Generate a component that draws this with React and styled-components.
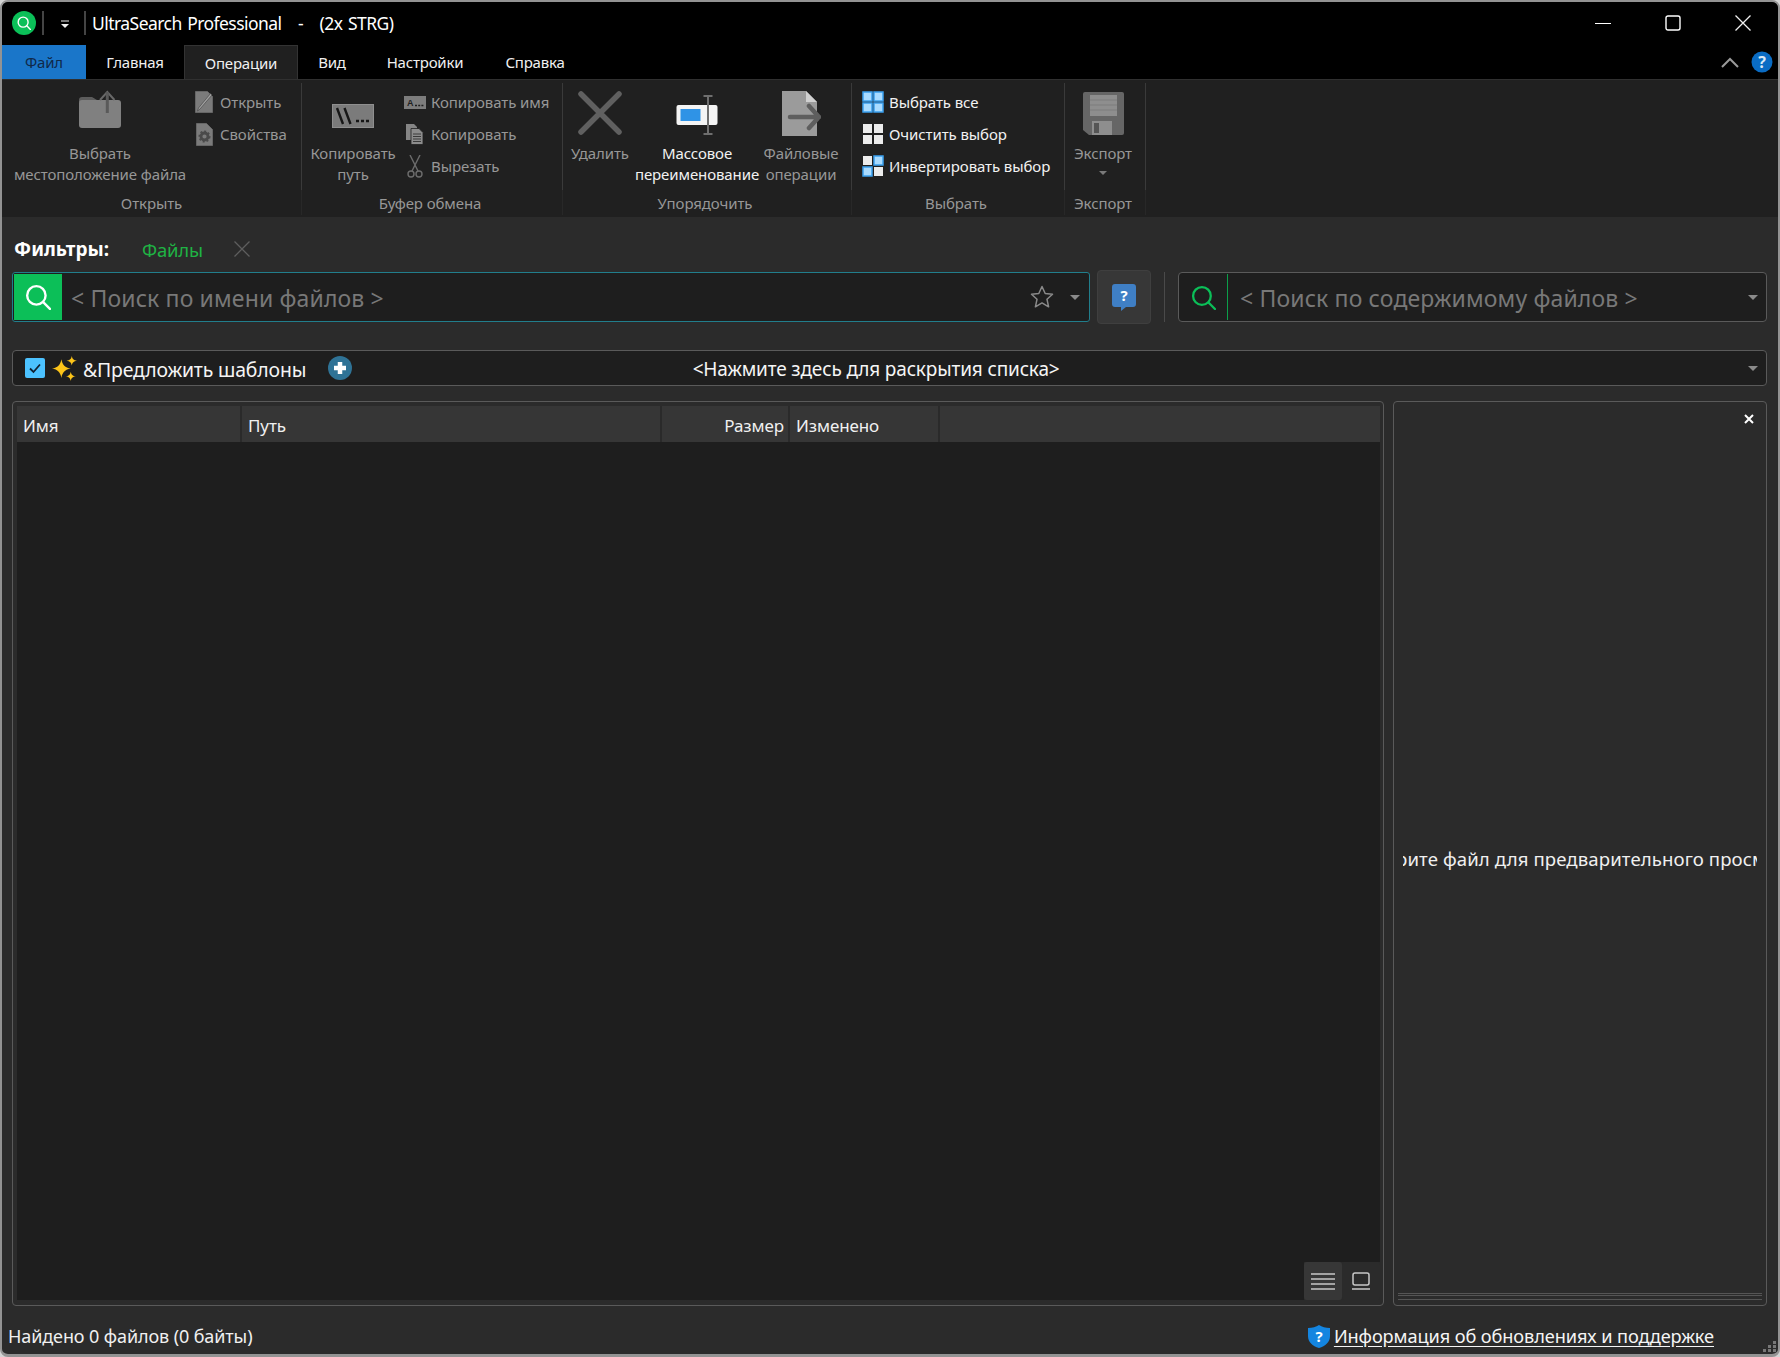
import React from "react";
import styled, { createGlobalStyle } from "styled-components";

const Global = createGlobalStyle`
  html, body { margin: 0; padding: 0; background: #d4d4d4; }
  body { font-family: "Noto Sans", "Open Sans", sans-serif; }
`;

const Win = styled.div`
  box-sizing: border-box;
  width: 1780px;
  height: 1357px;
  display: flex;
  flex-direction: column;
  background: #2b2b2b;
  border: 2px solid #939393;
  border-bottom-width: 3px;
  border-radius: 8px;
  overflow: hidden;
  color: #fff;
`;

const TitleBar = styled.div`
  height: 43px;
  flex: none;
  background: #000;
  display: flex;
  align-items: center;
  padding: 0 0 2px 10px;
  box-sizing: border-box;
`;
const Logo = styled.div`
  width: 24px;
  height: 24px;
  border-radius: 50%;
  background: #0bbf58;
  display: flex;
  align-items: center;
  justify-content: center;
`;
const TitleSep = styled.div`
  width: 2px;
  height: 24px;
  background: #444;
  margin-left: ${(p) => p.$ml}px;
`;
const TitleMenu = styled.svg`
  margin: 3px 0 0 16px;
  flex: none;
`;
const TitleText = styled.div`
  font-size: 17.5px;
  margin-left: 6px;
  white-space: pre;
  letter-spacing: -0.55px;
  word-spacing: 1.5px;
`;
const WinCtrls = styled.div`
  margin-left: auto;
  display: flex;
  align-items: center;
  padding-right: 27px;
  gap: 54px;
`;
const TabBar = styled.div`
  height: 34px;
  flex: none;
  background: #000;
  display: flex;
  align-items: stretch;
`;
const Tab = styled.div`
  width: ${(p) => p.$w}px;
  display: flex;
  align-items: center;
  justify-content: center;
  font-size: 15px;
  letter-spacing: -0.2px;
  box-sizing: border-box;
  color: ${(p) => (p.$file ? "#10294a" : "#f0f0f0")};
  background: ${(p) => (p.$file ? "#1a76c9" : p.$active ? "#202020" : "#000")};
  border: ${(p) => (p.$active ? "1px solid #333" : "none")};
  border-bottom: none;
`;
const TabEnd = styled.div`
  margin-left: auto;
  display: flex;
  align-items: center;
  gap: 12px;
  padding-right: 5px;
`;

const Ribbon = styled.div`
  height: 138px;
  flex: none;
  background: #202020;
  border-top: 1px solid #303030;
  box-sizing: border-box;
  display: flex;
`;
const Group = styled.div`
  width: ${(p) => p.$w}px;
  box-sizing: border-box;
  flex: none;
  display: flex;
  flex-direction: column;
`;
const GroupBody = styled.div`
  height: 107px;
  margin-top: 3px;
  display: flex;
  border-right: 1px solid #3a3a3a;
  box-sizing: border-box;
  padding-left: ${(p) => p.$pl || 0}px;
`;
const GroupLabel = styled.div`
  flex: 1;
  display: flex;
  align-items: center;
  justify-content: center;
  padding-right: ${(p) => p.$pr || 0}px;
  font-size: 15px;
  letter-spacing: -0.1px;
  color: #979797;
  border-right: 1px solid #282828;
  margin-bottom: 2px;
`;
const LargeBtn = styled.div`
  width: ${(p) => p.$w}px;
  flex: none;
  display: flex;
  flex-direction: column;
  align-items: center;
  color: ${(p) => (p.$on ? "#f2f2f2" : "#979797")};
  font-size: 15px;
  letter-spacing: -0.1px;
  line-height: 21px;
  text-align: center;
  white-space: nowrap;
`;
const LargeIcon = styled.div`
  height: 60px;
  box-sizing: border-box;
  flex: none;
  display: flex;
  align-items: center;
  justify-content: center;
  padding-top: ${(p) => p.$dy || 0}px;
  padding-bottom: ${(p) => p.$up || 0}px;
`;
const SmallCol = styled.div`
  display: flex;
  flex-direction: column;
  padding-top: 3px;
  margin-left: ${(p) => p.$ml || 0}px;
`;
const SmallBtn = styled.div`
  height: 32px;
  display: flex;
  align-items: center;
  white-space: nowrap;
  gap: ${(p) => p.$gap || 7}px;
  font-size: 15px;
  letter-spacing: -0.1px;
  color: ${(p) => (p.$on ? "#f2f2f2" : "#979797")};
`;
const SmallIcon = styled.div`
  width: ${(p) => p.$w || 18}px;
  flex: none;
  display: flex;
  align-items: center;
  justify-content: center;
`;

const Main = styled.div`
  flex: 1;
  min-height: 0;
  display: flex;
  flex-direction: column;
  padding: 0 11px 0 10px;
`;
const Filters = styled.div`
  height: 55px;
  flex: none;
  display: flex;
  align-items: center;
  padding: 9px 0 0 2px;
  box-sizing: border-box;
`;
const FilterLabel = styled.div`
  font-weight: 700;
  font-size: 19px;
  width: 128px;
  white-space: nowrap;
`;
const FilterTag = styled.div`
  color: #1fb344;
  font-size: 18.5px;
  letter-spacing: -0.2px;
  width: 92px;
`;
const SearchRow = styled.div`
  height: 50px;
  flex: none;
  display: flex;
  align-items: stretch;
`;
const NameSearch = styled.div`
  width: 1078px;
  flex: none;
  box-sizing: border-box;
  border: 1px solid #217e8c;
  border-radius: 3px;
  background: #1e1e1e;
  padding: 1px;
  display: flex;
  align-items: center;
`;
const GreenBlock = styled.div`
  width: 48px;
  align-self: stretch;
  background: #0cbf58;
  display: flex;
  align-items: center;
  justify-content: center;
  flex: none;
`;
const Placeholder = styled.div`
  font-size: 23px;
  letter-spacing: 0.14px;
  color: #787878;
  margin-left: ${(p) => p.$ml}px;
  padding-top: 2px;
  white-space: nowrap;
  flex: 1;
`;
const Star = styled.svg`
  flex: none;
  margin-right: 0;
`;
const Caret = styled.div`
  width: 0;
  height: 0;
  border-left: 5px solid transparent;
  border-right: 5px solid transparent;
  border-top: 5px solid #8a8a8a;
  flex: none;
  margin-left: ${(p) => p.$ml || 0}px;
  margin-right: ${(p) => p.$mr || 0}px;
`;
const TinyCaret = styled(Caret)`
  margin-top: 7px;
  border-top: 4px solid #7a7a7a;
  border-left-width: 4px;
  border-right-width: 4px;
`;
const HelpBtn = styled.div`
  width: 54px;
  flex: none;
  box-sizing: border-box;
  margin: -2px 0 -2px 7px;
  background: #373737;
  border: 1px solid #3f3f3f;
  border-radius: 4px;
  display: flex;
  align-items: center;
  justify-content: center;
`;
const VSep = styled.div`
  width: 1px;
  flex: none;
  background: #4a4a4a;
  margin: 0 13px 0 13px;
`;
const ContentSearch = styled.div`
  flex: 1;
  min-width: 0;
  box-sizing: border-box;
  border: 1px solid #5a5a5a;
  border-radius: 4px;
  background: #1e1e1e;
  display: flex;
  align-items: center;
`;
const ContentIcon = styled.div`
  width: 48px;
  flex: none;
  align-self: stretch;
  margin: 1px 0;
  border-right: 1px solid #0b9f4a;
  display: flex;
  align-items: center;
  justify-content: center;
`;
const SuggestRow = styled.div`
  height: 36px;
  flex: none;
  margin-top: 28px;
  box-sizing: border-box;
  border: 1px solid #5a5a5a;
  border-radius: 4px;
  background: #1e1e1e;
  display: flex;
  align-items: center;
  padding-left: 12px;
`;
const CheckBox = styled.div`
  width: 20px;
  height: 20px;
  border-radius: 2px;
  background: #4cc2ff;
  display: flex;
  align-items: center;
  justify-content: center;
  flex: none;
  margin-right: 7px;
`;
const SuggestText = styled.div`
  font-size: 19.4px;
  color: #f5f5f5;
  margin-left: 6px;
  padding-top: 2px;
  letter-spacing: -0.15px;
  white-space: nowrap;
`;
const PlusCircle = styled.div`
  margin-left: 22px;
  display: flex;
`;
const Expand = styled.div`
  flex: 1;
  text-align: center;
  padding: 2px 348px 0 0;
  font-size: 19px;
  letter-spacing: -0.15px;
  color: #f5f5f5;
`;
const Panels = styled.div`
  flex: 1;
  min-height: 0;
  margin-top: 15px;
  display: flex;
  gap: 9px;
`;
const ListPanel = styled.div`
  width: 1372px;
  flex: none;
  box-sizing: border-box;
  border: 1px solid #5a5a5a;
  border-radius: 4px;
  padding: 4px 3px 5px 4px;
  display: flex;
  flex-direction: column;
`;
const HeaderRow = styled.div`
  height: 36px;
  flex: none;
  display: flex;
  background: #363636;
`;
const HeaderCell = styled.div`
  width: ${(p) => (p.$w ? `${p.$w}px` : "auto")};
  flex: ${(p) => (p.$w ? "none" : 1)};
  box-sizing: border-box;
  border-right: ${(p) => (p.$w ? "2px solid #2a2a2a" : "none")};
  display: flex;
  align-items: center;
  justify-content: ${(p) => (p.$right ? "flex-end" : "flex-start")};
  padding: 2px 4px 0 6px;
  font-size: 17px;
  letter-spacing: -0.1px;
  color: #f0f0f0;
`;
const ListBody = styled.div`
  flex: 1;
  min-height: 0;
  background: #1e1e1e;
  display: flex;
  align-items: flex-end;
  justify-content: flex-end;
`;
const ViewToggle = styled.div`
  display: flex;
  background: #2b2b2b;
`;
const ViewBtn = styled.div`
  width: 38px;
  height: 38px;
  display: flex;
  align-items: center;
  justify-content: center;
  background: ${(p) => (p.$on ? "#373737" : "#2b2b2b")};
  border-radius: 3px;
`;
const PreviewPanel = styled.div`
  flex: 1;
  min-width: 0;
  box-sizing: border-box;
  border: 1px solid #5a5a5a;
  border-radius: 4px;
  padding: 0 4px 5px;
  display: flex;
  flex-direction: column;
  position: relative;
`;
const PreviewClose = styled.div`
  position: absolute;
  top: 12px;
  right: 12px;
  display: flex;
`;
const PreviewBody = styled.div`
  flex: 1;
  min-height: 0;
  display: flex;
  align-items: center;
  justify-content: center;
  overflow: hidden;
  margin: 0 5px;
  padding-top: 22px;
`;
const PreviewText = styled.div`
  flex: none;
  white-space: nowrap;
  font-size: 18.6px;
  letter-spacing: 0.1px;
  color: #f0f0f0;
  margin-right: 4px;
`;
const Grip = styled.div`
  height: 5px;
  flex: none;
  border-top: 1px solid #555;
  border-bottom: 1px solid #555;
  position: relative;
  &::after {
    content: "";
    position: absolute;
    left: 0;
    right: 0;
    top: 1px;
    height: 1px;
    background: #555;
  }
`;
const StatusBar = styled.div`
  height: 48px;
  flex: none;
  display: flex;
  align-items: center;
  margin-left: -4px;
  margin-right: -11px;
  padding: 12px 0 0 0;
  box-sizing: border-box;
  position: relative;
`;
const StatusText = styled.div`
  font-size: 18px;
  color: #f0f0f0;
  letter-spacing: -0.1px;
`;
const StatusLink = styled.div`
  margin-left: auto;
  display: flex;
  align-items: center;
  gap: 4px;
  margin-right: 64px;
  font-size: 18.2px;
  letter-spacing: -0.1px;
  color: #f5f5f5;
  text-decoration: underline;
  text-underline-offset: 3px;
`;
const Resize = styled.div`
  position: absolute;
  right: 1px;
  bottom: 1px;
  display: flex;
`;

const Search = ({ size = 22, color = "#fff", sw = 2.2 }) => (
  <svg width={size} height={size} viewBox="0 0 24 24" fill="none" stroke={color} strokeWidth={sw} strokeLinecap="round">
    <circle cx="10.5" cy="10.5" r="8.5" />
    <path d="M16.8 16.8 23 23" />
  </svg>
);

const FolderUp = () => (
  <svg width="42" height="38" viewBox="0 0 42 38">
    <path d="M0 10a3 3 0 0 1 3-3h10l5 3v2H0z" fill="#5c5c5c" />
    <path d="M0 13a3 3 0 0 1 3-3h36a3 3 0 0 1 3 3v22a3 3 0 0 1-3 3H3a3 3 0 0 1-3-3z" fill="#808080" />
    <path d="M21 10 28.300 2 35.500 10" fill="none" stroke="#686868" strokeWidth="2" />
    <path d="M28.300 2v21" stroke="#5a5a5a" strokeWidth="3" />
  </svg>
);
const DocPen = () => (
  <svg width="18" height="22" viewBox="0 0 18 22">
    <path d="M.5.5h12l5 5v16H.5z" fill="#7b7b7b" stroke="#666" />
    <path d="M15.500 2.500 17 4 5 18 2.500 20 3.500 17z" fill="#a0a0a0" stroke="#404040" strokeWidth=".6" />
  </svg>
);
const DocGear = () => (
  <svg width="17" height="23" viewBox="0 0 17 23">
    <path d="M.5.5h10l6 6v16H.5z" fill="#7b7b7b" stroke="#666" />
    <circle cx="8.500" cy="13.500" r="3.500" fill="none" stroke="#4a4a4a" strokeWidth="2.800" />
    <circle cx="8.500" cy="13.500" r="5.300" fill="none" stroke="#4a4a4a" strokeWidth="1.400" strokeDasharray="2 2" />
  </svg>
);
const PathIcon = () => (
  <svg width="42" height="24" viewBox="0 0 42 24">
    <rect x=".5" y=".5" width="41" height="23" fill="#7b7b7b" stroke="#8f8f8f" />
    <path d="M5 4l6 16M12.500 4l6 16" stroke="#161616" strokeWidth="2.400" />
    <path d="M24 17h3M29 17h3M34 17h3" stroke="#161616" strokeWidth="2.600" />
  </svg>
);
const NameIcon = () => (
  <svg width="22" height="13" viewBox="0 0 22 13">
    <rect width="22" height="13" fill="#7d7d7d" />
    <text x="3" y="10" fontSize="9" fontWeight="700" fontFamily="Liberation Sans" fill="#1f1f1f">A</text>
    <path d="M11 9.500h2M14.200 9.500h2M17.400 9.500h2" stroke="#1f1f1f" strokeWidth="1.400" />
  </svg>
);
const CopyIcon = () => (
  <svg width="18" height="21" viewBox="0 0 18 21">
    <path d="M0 0h8l3 3v13H0z" fill="#858585" />
    <path d="M5 4.500h8l4 4v12H5z" fill="#8c8c8c" stroke="#202020" strokeWidth=".8" />
    <path d="M7 10h8M7 12.500h8M7 15h8M7 17.500h8" stroke="#3a3a3a" strokeWidth="1" />
  </svg>
);
const ScissorsIcon = () => (
  <svg width="16" height="23" viewBox="0 0 16 23" fill="none" stroke="#6c6c6c" strokeWidth="1.400">
    <path d="M3 0l8 16M13 0 5 16" />
    <circle cx="4" cy="19" r="3" />
    <circle cx="12" cy="19" r="3" />
  </svg>
);
const DeleteIcon = () => (
  <svg width="44" height="44" viewBox="0 0 44 44">
    <path d="M3 3 41 41M41 3 3 41" stroke="#606060" strokeWidth="5.500" strokeLinecap="round" />
  </svg>
);
const RenameIcon = () => (
  <svg width="42" height="40" viewBox="0 0 42 40" fill="none">
    <rect x="0.500" y="10" width="41" height="20" rx="2" fill="#f4f4f4" />
    <rect x="4.500" y="14" width="20" height="12" fill="#2f93e6" />
    <path d="M32 1v38M27.500 1h9M27.500 39h9" stroke="#6e6e6e" strokeWidth="2" />
  </svg>
);
const FileOps = () => (
  <svg width="40" height="45" viewBox="0 0 40 45">
    <path d="M1 0h24l11 11v34H1z" fill="#9b9b9b" />
    <path d="M25 0l11 11H25z" fill="#d0d0d0" />
    <path d="M9 26h29M28 15l10 11-10 11" fill="none" stroke="#5e5e5e" strokeWidth="4.500" strokeLinecap="round" strokeLinejoin="round" />
  </svg>
);
const Cell = ({ x, y, blue }) => (
  <rect
    x={x}
    y={y}
    width="9"
    height="9"
    fill={blue ? "#a9dbff" : "#ececec"}
    stroke={blue ? "#3aa0ef" : "none"}
    strokeWidth="1.500"
  />
);
const Quad = ({ a, b, c, d }) => (
  <svg width="22" height="22" viewBox="0 0 22 22">
    <Cell x={1} y={1} blue={a} />
    <Cell x={12} y={1} blue={b} />
    <Cell x={1} y={12} blue={c} />
    <Cell x={12} y={12} blue={d} />
  </svg>
);
const Floppy = () => (
  <svg width="41" height="43" viewBox="0 0 41 43">
    <path d="M2 0h37a2 2 0 0 1 2 2v39a2 2 0 0 1-2 2H6l-6-5V2a2 2 0 0 1 2-2z" fill="#666" />
    <rect x="7" y="3" width="27" height="21" fill="#8e8e8e" />
    <path d="M7 8h27M7 13h27M7 18h27" stroke="#7c7c7c" strokeWidth="1" />
    <rect x="9" y="29" width="20" height="14" fill="#8e8e8e" />
    <rect x="11" y="31" width="5" height="10" fill="#555" />
  </svg>
);
const Sparkles = () => (
  <svg width="25" height="25" viewBox="0 0 24 24" fill="#fcc419">
    <path d="M9 3c1 5.500 3.500 8 9 9-5.500 1-8 3.500-9 9-1-5.500-3.500-8-9-9 5.500-1 8-3.500 9-9z" />
    <path d="M19 0c.6 2.800 1.700 4 5 4.500-3.300.5-4.400 1.700-5 4.500-.6-2.800-1.700-4-5-4.500 3.300-.5 4.400-1.700 5-4.500z" />
    <path d="M18 15c.6 2.800 1.700 4 5 4.500-3.300.5-4.400 1.700-5 4.500-.6-2.800-1.700-4-5-4.500 3.300-.5 4.400-1.700 5-4.500z" />
  </svg>
);

export default function App() {
  return (
    <>
      <Global />
      <Win>
        <TitleBar>
          <Logo>
            <Search size={14} sw={2.4} />
          </Logo>
          <TitleSep $ml={6} />
          <TitleMenu width="10" height="10" viewBox="0 0 10 10">
            <path d="M1 2h8" stroke="#eee" strokeWidth="1" />
            <path d="M1 5h8L5 9z" fill="#eee" />
          </TitleMenu>
          <TitleSep $ml={14} />
          <TitleText>{"UltraSearch Professional   -   (2x STRG)"}</TitleText>
          <WinCtrls>
            <svg width="16" height="16" viewBox="0 0 16 16"><path d="M0 8.500h16" stroke="#fff" strokeWidth="1.200" /></svg>
            <svg width="16" height="16" viewBox="0 0 16 16" fill="none"><rect x="1" y="1" width="14" height="14" rx="2" stroke="#fff" strokeWidth="1.400" /></svg>
            <svg width="16" height="16" viewBox="0 0 16 16" fill="none"><path d="M.5.5l15 15M15.500.5l-15 15" stroke="#f0f0f0" strokeWidth="1.300" /></svg>
          </WinCtrls>
        </TitleBar>
        <TabBar>
          <Tab $w={84} $file>Файл</Tab>
          <Tab $w={98}>Главная</Tab>
          <Tab $w={114} $active>Операции</Tab>
          <Tab $w={68}>Вид</Tab>
          <Tab $w={118}>Настройки</Tab>
          <Tab $w={102}>Справка</Tab>
          <TabEnd>
            <svg width="18" height="11" viewBox="0 0 18 11" fill="none"><path d="M1 10l8-8 8 8" stroke="#9a9a9a" strokeWidth="2" /></svg>
            <svg width="22" height="22" viewBox="0 0 22 22">
              <circle cx="11" cy="11" r="10.500" fill="#0a6cc4" />
              <text x="11" y="17" textAnchor="middle" fontFamily="Noto Sans" fontWeight="700" fontSize="16" fill="#dbe9f6">?</text>
            </svg>
          </TabEnd>
        </TabBar>
        <Ribbon>
          <Group $w={300}>
            <GroupBody>
              <LargeBtn $w={196}>
                <LargeIcon $up={8}><FolderUp /></LargeIcon>
                <span>Выбрать</span>
                <span>местоположение файла</span>
              </LargeBtn>
              <SmallCol $ml={-3}>
                <SmallBtn $gap={7}><SmallIcon><DocPen /></SmallIcon>Открыть</SmallBtn>
                <SmallBtn $gap={7}><SmallIcon><DocGear /></SmallIcon>Свойства</SmallBtn>
              </SmallCol>
            </GroupBody>
            <GroupLabel>Открыть</GroupLabel>
          </Group>
          <Group $w={261}>
            <GroupBody $pl={8}>
              <LargeBtn $w={86}>
                <LargeIcon $dy={5}><PathIcon /></LargeIcon>
                <span>Копировать</span>
                <span>путь</span>
              </LargeBtn>
              <SmallCol $ml={8}>
                <SmallBtn $gap={5}><SmallIcon $w={22}><NameIcon /></SmallIcon>Копировать имя</SmallBtn>
                <SmallBtn $gap={5}><SmallIcon $w={22}><CopyIcon /></SmallIcon>Копировать</SmallBtn>
                <SmallBtn $gap={5}><SmallIcon $w={22}><ScissorsIcon /></SmallIcon>Вырезать</SmallBtn>
              </SmallCol>
            </GroupBody>
            <GroupLabel $pr={4}>Буфер обмена</GroupLabel>
          </Group>
          <Group $w={289}>
            <GroupBody>
              <LargeBtn $w={74}>
                <LargeIcon><DeleteIcon /></LargeIcon>
                <span>Удалить</span>
              </LargeBtn>
              <LargeBtn $w={120} $on>
                <LargeIcon $dy={4}><RenameIcon /></LargeIcon>
                <span>Массовое</span>
                <span>переименование</span>
              </LargeBtn>
              <LargeBtn $w={88}>
                <LargeIcon><FileOps /></LargeIcon>
                <span>Файловые</span>
                <span>операции</span>
              </LargeBtn>
            </GroupBody>
            <GroupLabel $pr={4}>Упорядочить</GroupLabel>
          </Group>
          <Group $w={213}>
            <GroupBody $pl={10}>
              <SmallCol>
                <SmallBtn $on $gap={5}><Quad a b c d />Выбрать все</SmallBtn>
                <SmallBtn $on $gap={5}><Quad />Очистить выбор</SmallBtn>
                <SmallBtn $on $gap={5}><Quad b c />Инвертировать выбор</SmallBtn>
              </SmallCol>
            </GroupBody>
            <GroupLabel $pr={4}>Выбрать</GroupLabel>
          </Group>
          <Group $w={81}>
            <GroupBody>
              <LargeBtn $w={76}>
                <LargeIcon><Floppy /></LargeIcon>
                <span>Экспорт</span>
                <TinyCaret />
              </LargeBtn>
            </GroupBody>
            <GroupLabel $pr={4}>Экспорт</GroupLabel>
          </Group>
        </Ribbon>
        <Main>
          <Filters>
            <FilterLabel>Фильтры:</FilterLabel>
            <FilterTag>Файлы</FilterTag>
            <svg width="16" height="16" viewBox="0 0 16 16"><path d="M.5.5l15 15M15.500.5l-15 15" stroke="#5e5e5e" strokeWidth="1.300" /></svg>
          </Filters>
          <SearchRow>
            <NameSearch>
              <GreenBlock><Search size={26} sw={2.2} /></GreenBlock>
              <Placeholder $ml={9}>{"< Поиск по имени файлов >"}</Placeholder>
              <Star width="24" height="24" viewBox="0 0 24 24" fill="none" stroke="#8a8a8a" strokeWidth="1.500" strokeLinejoin="round"><path d="M12 1.500l3.200 7 7.300.8-5.500 5 1.600 7.500-6.600-3.900-6.600 3.900 1.600-7.500-5.500-5 7.300-.8z" /></Star>
              <Caret $ml={16} $mr={8} />
            </NameSearch>
            <HelpBtn>
              <svg width="24" height="27" viewBox="0 0 24 27">
                <path d="M3 0h18a3 3 0 0 1 3 3v17a3 3 0 0 1-3 3h-7l-5 4v-4H3a3 3 0 0 1-3-3V3a3 3 0 0 1 3-3z" fill="#3f7fc5" />
                <text x="12" y="17" textAnchor="middle" fontFamily="Noto Sans" fontWeight="700" fontSize="15" fill="#fff">?</text>
              </svg>
            </HelpBtn>
            <VSep />
            <ContentSearch>
              <ContentIcon><Search size={25} color="#0bbf58" sw={2.2} /></ContentIcon>
              <Placeholder $ml={12}>{"< Поиск по содержимому файлов >"}</Placeholder>
              <Caret $mr={8} />
            </ContentSearch>
          </SearchRow>
          <SuggestRow>
            <CheckBox>
              <svg width="14" height="14" viewBox="0 0 14 14" fill="none"><path d="M2 7.500 5.500 11 12 3.500" stroke="#123" strokeWidth="1.800" /></svg>
            </CheckBox>
            <Sparkles />
            <SuggestText>&amp;Предложить шаблоны</SuggestText>
            <PlusCircle>
              <svg width="24" height="24" viewBox="0 0 24 24">
                <circle cx="12" cy="12" r="12" fill="#2f7396" />
                <path d="M12 6v12M6 12h12" stroke="#fff" strokeWidth="4.500" />
              </svg>
            </PlusCircle>
            <Expand>&lt;Нажмите здесь для раскрытия списка&gt;</Expand>
            <Caret $mr={8} />
          </SuggestRow>
          <Panels>
            <ListPanel>
              <HeaderRow>
                <HeaderCell $w={225}>Имя</HeaderCell>
                <HeaderCell $w={420}>Путь</HeaderCell>
                <HeaderCell $w={128} $right>Размер</HeaderCell>
                <HeaderCell $w={150}>Изменено</HeaderCell>
                <HeaderCell />
              </HeaderRow>
              <ListBody>
                <ViewToggle>
                  <ViewBtn $on>
                    <svg width="24" height="18" viewBox="0 0 24 18" fill="none" stroke="#c8c8c8" strokeWidth="1.500"><path d="M0 2h24M0 7h24M0 12h24M0 17h24" /></svg>
                  </ViewBtn>
                  <ViewBtn>
                    <svg width="18" height="18" viewBox="0 0 18 18" fill="none" stroke="#c8c8c8" strokeWidth="1.500"><rect x="1" y="1" width="16" height="12" rx="2" /><path d="M0 17h18" /></svg>
                  </ViewBtn>
                </ViewToggle>
              </ListBody>
            </ListPanel>
            <PreviewPanel>
              <PreviewClose>
                <svg width="10" height="10" viewBox="0 0 10 10"><path d="M1 1l8 8M9 1 1 9" stroke="#fff" strokeWidth="2" /></svg>
              </PreviewClose>
              <PreviewBody>
                <PreviewText>Выберите файл для предварительного просмотра</PreviewText>
              </PreviewBody>
              <Grip />
            </PreviewPanel>
          </Panels>
          <StatusBar>
            <StatusText>Найдено 0 файлов (0 байты)</StatusText>
            <StatusLink>
              <svg width="22" height="23" viewBox="0 0 22 23">
                <path d="M11 0c3 2 6.500 3 11 3v8c0 6-4.500 10-11 12C4.500 21 0 17 0 11V3c4.500 0 8-1 11-3z" fill="#1485e0" />
                <text x="11" y="17" textAnchor="middle" fontFamily="Noto Sans" fontWeight="700" fontSize="15" fill="#fff">?</text>
              </svg>
              <span>Информация об обновлениях и поддержке</span>
            </StatusLink>
            <Resize>
              <svg width="14" height="14" viewBox="0 0 14 14" fill="#777">
                <rect x="10" y="2" width="3" height="3" /><rect x="5" y="6" width="3" height="3" /><rect x="10" y="6" width="3" height="3" /><rect x="0" y="10" width="3" height="3" /><rect x="5" y="10" width="3" height="3" /><rect x="10" y="10" width="3" height="3" />
              </svg>
            </Resize>
          </StatusBar>
        </Main>
      </Win>
    </>
  );
}
